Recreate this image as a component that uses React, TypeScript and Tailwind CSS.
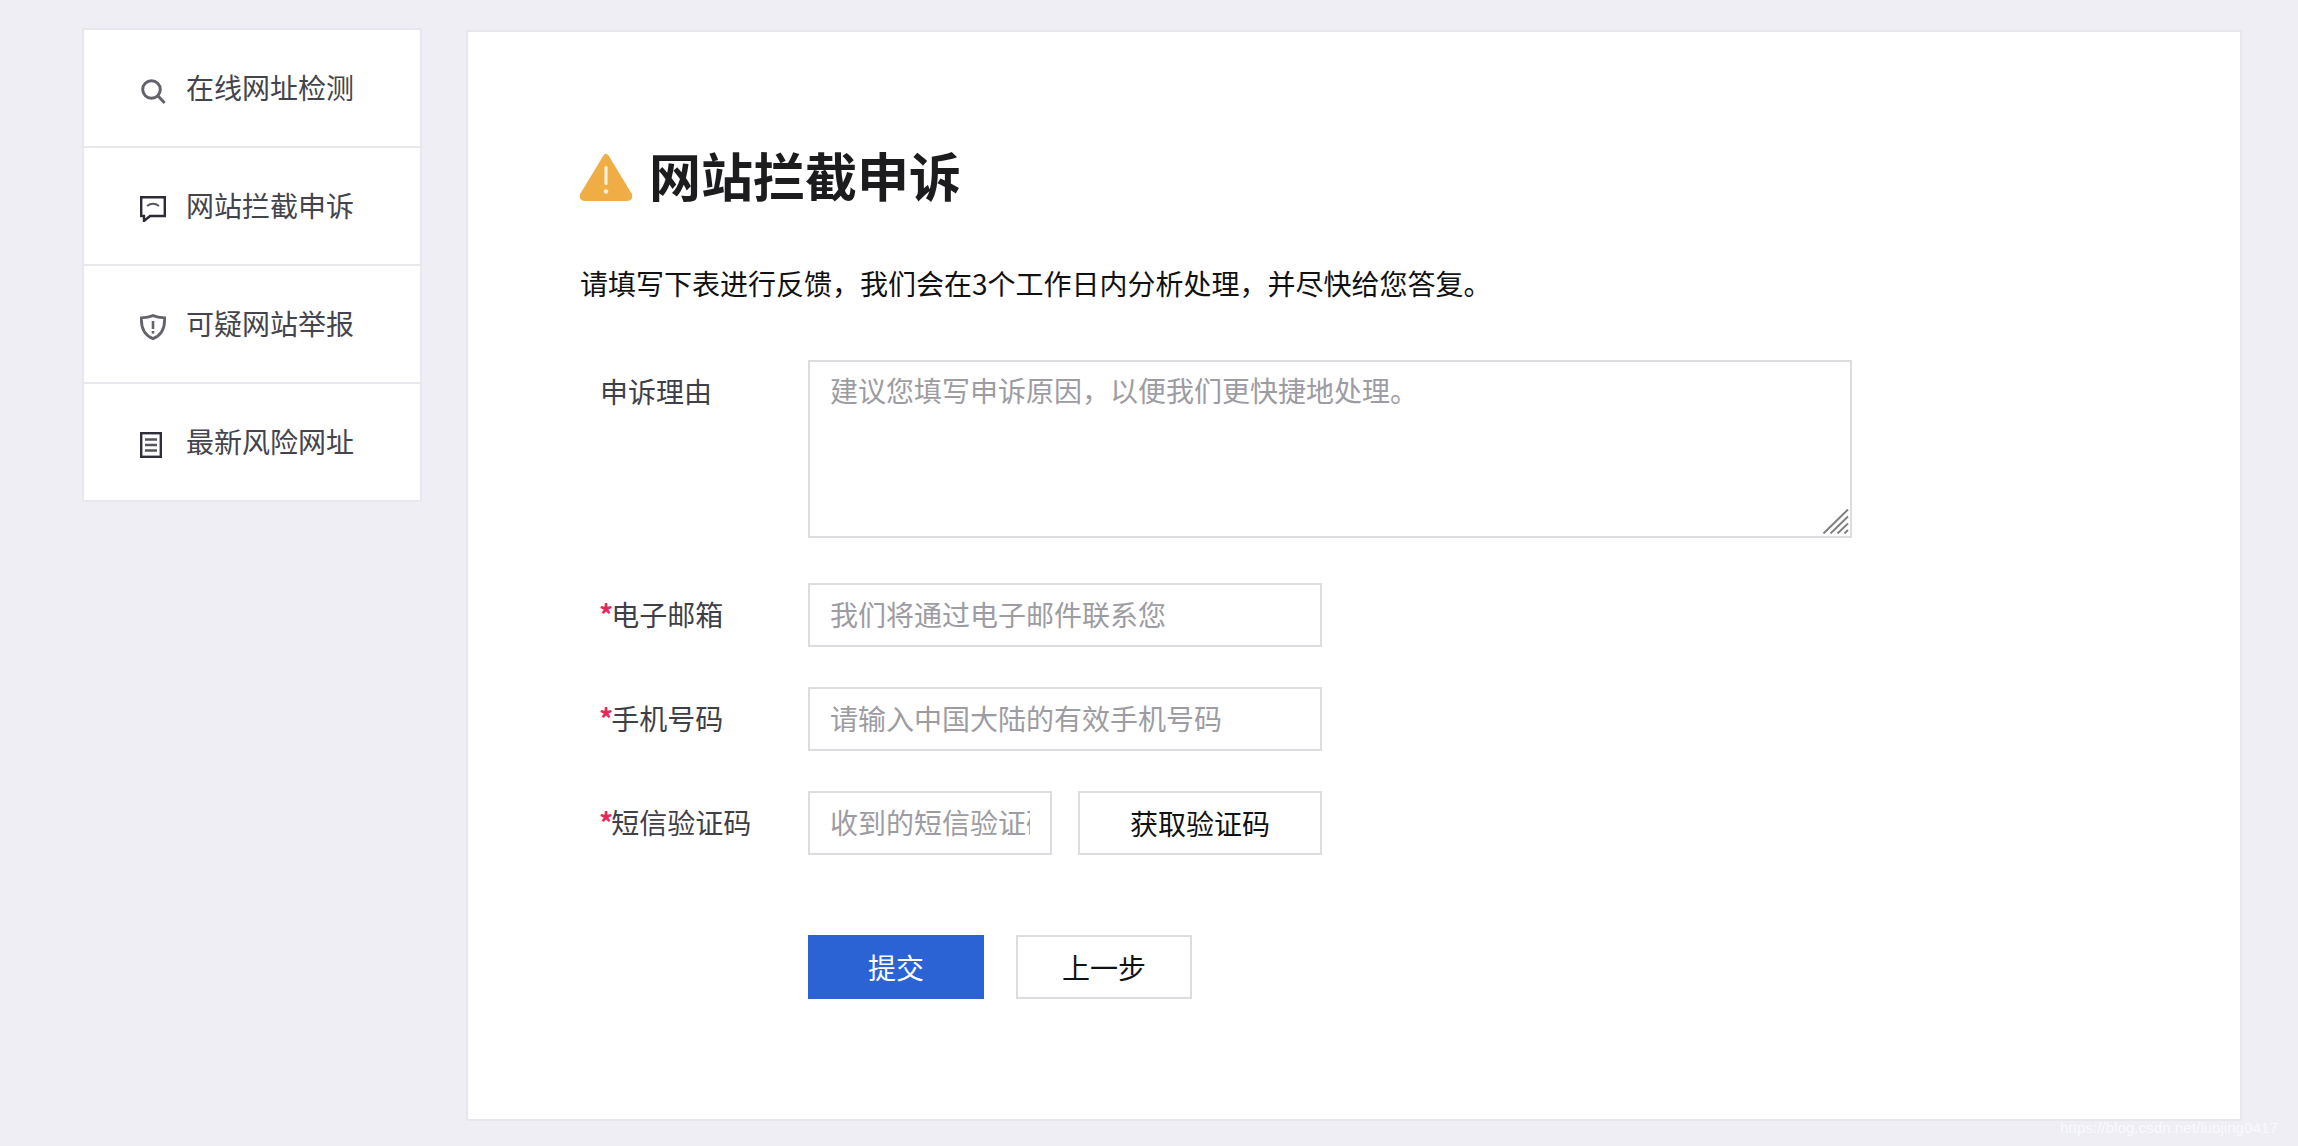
import React from 'react';

const cjk = { fontFamily: '"Noto Sans CJK SC", "Liberation Sans", sans-serif' };

const SearchIcon = () => (
  <svg width="26" height="26" viewBox="0 0 26 26" fill="none" stroke="#63636c" strokeWidth="3">
    <circle cx="11.5" cy="11.5" r="8.8" />
    <path d="M17.8 17.8 L24.6 25" />
  </svg>
);

const ChatIcon = () => (
  <svg width="26" height="26" viewBox="0 0 26 26" fill="none" stroke="#2b2b38" strokeWidth="2.4">
    <path d="M1.2 1.2 H24.8 V20 H10 L4 25 V20 H1.2 Z" />
    <path d="M7 10 Q13 5.5 19 10" strokeWidth="2" stroke="#55555f" />
  </svg>
);

const ShieldIcon = () => (
  <svg width="26" height="26" viewBox="0 0 26 26" fill="none" stroke="#63636c" strokeWidth="2.8">
    <path d="M13 1.6 C17 3.2 21 3.6 24.6 3.8 C25 13 22 21 13 24.6 C4 21 1 13 1.4 3.8 C5 3.6 9 3.2 13 1.6 Z" />
    <path d="M13 7 V15" strokeWidth="2.6" />
    <path d="M13 17 V19.6" strokeWidth="2.6" />
  </svg>
);

const ListIcon = () => (
  <svg width="22" height="26" viewBox="0 0 22 26" fill="none" stroke="#2f2f3a" strokeWidth="2.4">
    <rect x="1.2" y="1.2" width="19.6" height="23.6" />
    <path d="M5 7.5 H17 M5 13 H17 M5 18.5 H17" stroke="#55555f" />
  </svg>
);

const WarningIcon = () => (
  <svg width="56" height="50" viewBox="0 0 56 50">
    <path
      d="M28 5 L51 43 Q52 46 49 46 L7 46 Q4 46 5 43 Z"
      fill="#f0ad45"
      stroke="#f0ad45"
      strokeWidth="6"
      strokeLinejoin="round"
    />
    <rect x="26.4" y="14" width="3.2" height="19" rx="1.6" fill="#fdf0dc" />
    <circle cx="28" cy="39.5" r="2.2" fill="#fdf0dc" />
  </svg>
);

const ResizeGrip = () => (
  <svg width="26" height="25" viewBox="0 0 26 25" fill="none" stroke="#808080" strokeWidth="2">
    <path d="M0.5 24.5 L25 0.5 M7.5 24.5 L25 7.5 M14.5 24.5 L25 14.5 M21.5 24.5 L25 21" />
  </svg>
);

const menu = [
  { label: '在线网址检测', icon: <SearchIcon /> },
  { label: '网站拦截申诉', icon: <ChatIcon /> },
  { label: '可疑网站举报', icon: <ShieldIcon /> },
  { label: '最新风险网址', icon: <ListIcon /> },
];

const Label = ({ text, required }: { text: string; required?: boolean }) => (
  <div className="w-[228px] pl-[20px] text-[28px] leading-[62px] text-[#3f3f48] shrink-0 whitespace-nowrap">
    {required ? <span className="font-semibold text-[#e8265e] -ml-[1px] -mr-[2px]">*</span> : null}
    {text}
  </div>
);

const inputClass =
  'h-[64px] border-2 border-[#dcdce1] bg-white px-[20px] pb-[2px] text-[28px] text-[#333] outline-none placeholder:text-[#9c9ca2]';

export default function App() {
  return (
    <div className="relative w-[2298px] h-[1146px] overflow-hidden bg-[#eeeef4] flex items-start" style={cjk}>
      {/* sidebar */}
      <aside className="mt-[28px] ml-[82px] w-[340px] shrink-0 border-2 border-[#e7e7ed] bg-white divide-y-2 divide-[#e7e7ed]">
        {menu.map((item) => (
          <div key={item.label} className="h-[116px] box-content flex items-center pl-[56px] text-[28px] text-[#44444c]">
            <span className="w-[46px] h-[26px] mt-[6px] flex items-center justify-start">{item.icon}</span>
            <span className="leading-none -mt-[2px]">{item.label}</span>
          </div>
        ))}
      </aside>

      {/* main panel */}
      <main className="mt-[30px] ml-[44px] w-[1776px] h-[1091px] shrink-0 border-2 border-[#e7e7ed] bg-white pt-[113px] pl-[112px]">
        <div className="flex items-center h-[60px]">
          <span className="mt-[3px] -ml-[2px] flex">
            <WarningIcon />
          </span>
          <h1 className="ml-[15px] text-[52px] font-bold leading-none text-[#1c1c1f]">网站拦截申诉</h1>
        </div>

        <p className="mt-[58px] text-[28px] leading-[40px] text-[#111]">
          请填写下表进行反馈，我们会在3个工作日内分析处理，并尽快给您答复。
        </p>

        <div className="mt-[57px] flex flex-col">
          <div className="flex items-start">
            <Label text="申诉理由" />
            <div className="relative flex">
              <textarea
                className="w-[1044px] h-[178px] resize-none border-2 border-[#dcdce1] bg-white px-[20px] py-[10px] text-[28px] leading-[36px] text-[#333] outline-none placeholder:text-[#9c9ca2]"
                placeholder="建议您填写申诉原因，以便我们更快捷地处理。"
              />
              <span className="absolute right-[3px] bottom-[4px] flex">
                <ResizeGrip />
              </span>
            </div>
          </div>

          <div className="mt-[45px] flex items-start">
            <Label text="电子邮箱" required />
            <input className={`${inputClass} w-[514px]`} placeholder="我们将通过电子邮件联系您" />
          </div>

          <div className="mt-[40px] flex items-start">
            <Label text="手机号码" required />
            <input className={`${inputClass} w-[514px]`} placeholder="请输入中国大陆的有效手机号码" />
          </div>

          <div className="mt-[40px] flex items-start">
            <Label text="短信验证码" required />
            <input className={`${inputClass} w-[244px]`} placeholder="收到的短信验证码" />
            <button className="ml-[26px] w-[244px] h-[64px] border-2 border-[#dcdce1] bg-white text-[28px] text-[#111]">
              获取验证码
            </button>
          </div>

          <div className="mt-[80px] ml-[228px] flex items-start">
            <button className="w-[176px] h-[64px] bg-[#2b62d4] text-[28px] text-white">提交</button>
            <button className="ml-[32px] w-[176px] h-[64px] border-2 border-[#dcdce1] bg-white text-[28px] text-[#111]">
              上一步
            </button>
          </div>
        </div>
      </main>

      {/* csdn watermark */}
      <div
        className="absolute left-[2060px] top-[1118px] text-[15.2px] leading-[20px] text-white/70 whitespace-nowrap"
        style={{ fontFamily: '"Liberation Sans", sans-serif' }}
      >
        https://blog.csdn.net/luojing0417
      </div>
    </div>
  );
}
